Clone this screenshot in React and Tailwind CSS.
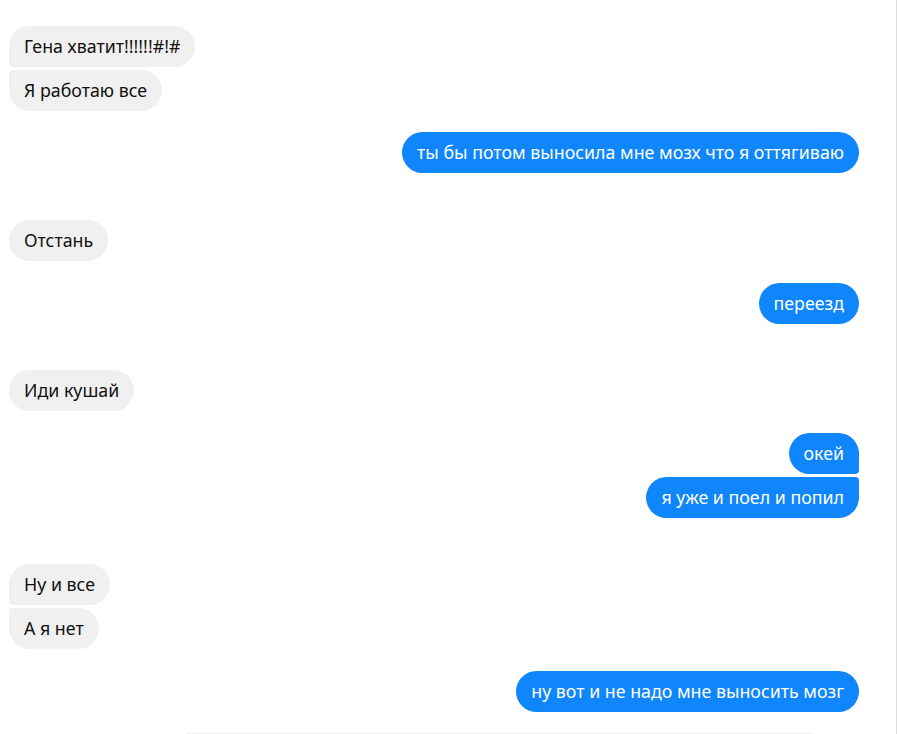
import React from 'react';

const messages = [
  { text: 'Гена хватит!!!!!!#!#', me: false, pos: 'first', mt: 'mt-0' },
  { text: 'Я работаю все', me: false, pos: 'last', mt: 'mt-[3px]' },
  { text: 'ты бы потом выносила мне мозх что я оттягиваю', me: true, pos: 'single', mt: 'mt-[21px]' },
  { text: 'Отстань', me: false, pos: 'single', mt: 'mt-[47px]' },
  { text: 'переезд', me: true, pos: 'single', mt: 'mt-[22px]' },
  { text: 'Иди кушай', me: false, pos: 'single', mt: 'mt-[46px]' },
  { text: 'окей', me: true, pos: 'first', mt: 'mt-[22px]' },
  { text: 'я уже и поел и попил', me: true, pos: 'last', mt: 'mt-[3px]' },
  { text: 'Ну и все', me: false, pos: 'first', mt: 'mt-[46px]' },
  { text: 'А я нет', me: false, pos: 'last', mt: 'mt-[3px]' },
  { text: 'ну вот и не надо мне выносить мозг', me: true, pos: 'single', mt: 'mt-[22px]' },
];

const corners = {
  theirs: {
    single: 'rounded-[21px]',
    first: 'rounded-[21px] rounded-bl-[4px]',
    last: 'rounded-[21px] rounded-tl-[4px]',
  },
  mine: {
    single: 'rounded-[21px]',
    first: 'rounded-[21px] rounded-br-[4px]',
    last: 'rounded-[21px] rounded-tr-[4px]',
  },
};

function Bubble({ text, me, pos, mt }) {
  return (
    <div className={`flex ${me ? 'justify-end' : 'justify-start'} ${mt}`}>
      <div
        className={`px-[15px] py-[10px] text-[17.8px] leading-[21px] whitespace-nowrap ${
          me ? 'bg-[#0f86fc] text-white ' + corners.mine[pos] : 'bg-[#f0f0f0] text-[#111] ' + corners.theirs[pos]
        }`}
      >
        {text}
      </div>
    </div>
  );
}

export default function App() {
  return (
    <div
      className="w-[897px] h-[734px] overflow-hidden bg-white border-r border-[#dcdcdc] flex flex-col"
      style={{ fontFamily: '"Noto Sans", "Open Sans", sans-serif' }}
    >
      <div className="flex flex-col pt-[26px] pl-[9px] pr-[37px]">
        {messages.map((m, i) => (
          <Bubble key={i} {...m} />
        ))}
      </div>
      <div className="mt-[21px] mx-[186px] mr-[83px] border-t border-[#eeeeee] h-4" />
    </div>
  );
}
